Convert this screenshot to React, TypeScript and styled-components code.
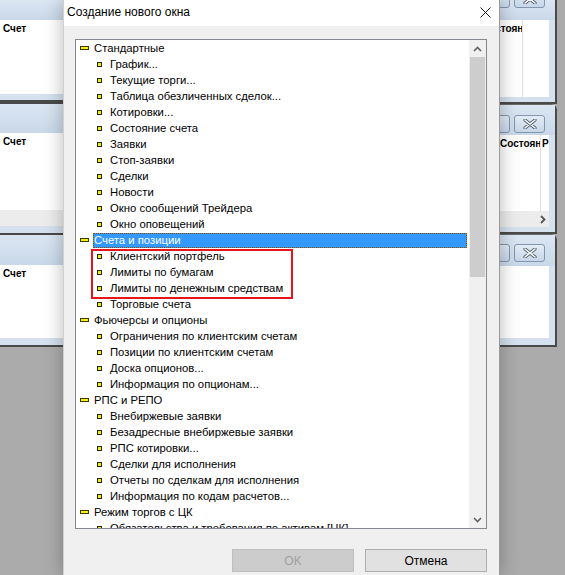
import React from 'react'
import styled, { createGlobalStyle } from 'styled-components'

const GlobalStyle = createGlobalStyle`
    html, body {
        margin: 0;
        padding: 0;
        background: #ababab;
    }
    body {
        font-family: "Liberation Sans", Arial, sans-serif;
        font-size: 12px;
        color: #000;
    }
`

const Desktop = styled.div`
    display: grid;
    grid-template-columns: 63px 437px 65px;
    width: 565px;
    height: 575px;
    overflow: hidden;
    background: #ababab;
`

const MdiColumn = styled.div<{ $side: 'left' | 'right' }>`
    display: flex;
    flex-direction: column;
    padding-right: ${p => p.$side === 'right' ? '8px' : '0'};
    margin-left: ${p => p.$side === 'right' ? '-30px' : '0'};
`

const MdiWindow = styled.div<{ $h: number; $rounded?: boolean }>`
    display: flex;
    flex-direction: column;
    height: ${p => p.$h}px;
    background: #d5e1ee;
    border-bottom: 2px solid #4a4a4a;
    border-top: ${p => p.$rounded ? '1px solid #6a6a6a' : '0'};
    border-right: 2px solid #4a4a4a;
    border-top-right-radius: ${p => p.$rounded ? '6px' : '0'};
    box-sizing: border-box;
    flex-shrink: 0;
`

const MdiLeftWindow = styled(MdiWindow)`
    border-right: 0;
`

const MdiTitle = styled.div<{ $h: number }>`
    display: flex;
    justify-content: flex-end;
    align-items: flex-start;
    gap: 4px;
    height: ${p => p.$h}px;
    padding-right: 10px;
    background: linear-gradient(#dbe6f2, #c9d8e9);
    flex-shrink: 0;
    box-sizing: border-box;
`

const MdiButton = styled.div<{ $w: number; $top: number }>`
    display: flex;
    align-items: center;
    justify-content: center;
    width: ${p => p.$w}px;
    height: 18px;
    margin-top: ${p => p.$top}px;
    border: 1px solid #8396ad;
    border-radius: 3px;
    background: linear-gradient(#e3ecf6, #c7d6e8);
    box-sizing: border-box;
    flex-shrink: 0;
`

const MdiBody = styled.div<{ $h: number; $sep?: number }>`
    position: relative;
    height: ${p => p.$h}px;
    background: #fff;
    margin-right: 6px;
    flex-shrink: 0;
    overflow: hidden;
    &::after {
        content: '';
        display: ${p => p.$sep ? 'block' : 'none'};
        position: absolute;
        top: 0;
        bottom: 0;
        left: ${p => p.$sep}px;
        border-left: 1px solid #e2e2e2;
    }
`

const MdiLeftBody = styled(MdiBody)`
    margin-right: 0;
`

const ColumnHead = styled.div<{ $x?: number; $w?: number }>`
    width: ${p => p.$w ? `${p.$w}px` : 'auto'};
    padding: 3px 0 0 ${p => p.$x ?? 3}px;
    font-size: 10px;
    font-weight: bold;
    white-space: nowrap;
    overflow: hidden;
    box-sizing: border-box;
    flex-shrink: 0;
`

const HeadRow = styled.div`
    display: flex;
`

const MdiHScroll = styled.div`
    display: flex;
    align-items: center;
    justify-content: flex-end;
    height: 16px;
    margin-right: 6px;
    padding-right: 3px;
    background: #ececec;
    color: #606060;
    flex-shrink: 0;
`

const Dialog = styled.div`
    display: flex;
    flex-direction: column;
    position: relative;
    z-index: 2;
    background: #f0f0f0;
    border-left: 1px solid #d0d0d0;
    border-right: 1px solid #9a9a9a;
    box-shadow: 0 0 18px rgba(0, 0, 0, 0.28);
    box-sizing: border-box;
`

const TitleBar = styled.div`
    display: flex;
    align-items: center;
    justify-content: space-between;
    height: 24px;
    padding: 0 8px 2px 3px;
    background: #fff;
    font-size: 12px;
    flex-shrink: 0;
`

const Body = styled.div`
    display: flex;
    flex-direction: column;
    padding: 13px 12px 0 11px;
`

const TreeBox = styled.div`
    display: flex;
    height: 490px;
    border: 1px solid #828790;
    background: #fff;
    box-sizing: border-box;
`

const TreeList = styled.div`
    position: relative;
    flex: 1;
    overflow: hidden;
    font-size: 11.3px;
`

const Row = styled.div<{ $level: number }>`
    display: flex;
    align-items: center;
    height: 16px;
    padding-left: ${p => p.$level === 0 ? 4 : 21}px;
    white-space: nowrap;
`

const GroupIcon = styled.span`
    width: 9px;
    height: 4px;
    background: #f6f000;
    border: 1px solid #3a3a00;
    box-sizing: border-box;
    margin-right: 4px;
    flex-shrink: 0;
`

const LeafIcon = styled.span`
    width: 5px;
    height: 5px;
    background: #f6f000;
    border: 1px solid #202000;
    box-sizing: border-box;
    margin-right: 7px;
    flex-shrink: 0;
`

const Label = styled.span<{ $selected?: boolean }>`
    display: flex;
    align-items: center;
    height: 15px;
    padding: 0 1px;
    background: ${p => p.$selected ? '#3399ff' : 'transparent'};
    color: ${p => p.$selected ? '#fff' : '#000'};
    outline: ${p => p.$selected ? '1px dotted #8a4a00' : 'none'};
    outline-offset: -1px;
    flex: ${p => p.$selected ? 1 : 'none'};
    margin-right: ${p => p.$selected ? '2px' : '0'};
`

const Mark = styled.div`
    position: absolute;
    top: 209px;
    left: 15px;
    width: 202px;
    height: 50px;
    border: 2px solid #e8141c;
    box-sizing: border-box;
    pointer-events: none;
`

const VScroll = styled.div`
    display: flex;
    flex-direction: column;
    width: 17px;
    background: #f0f0f0;
    flex-shrink: 0;
`

const ScrollArrow = styled.div`
    display: flex;
    align-items: center;
    justify-content: center;
    height: 17px;
    flex-shrink: 0;
`

const ScrollTrack = styled.div`
    flex: 1;
    display: flex;
    flex-direction: column;
`

const Thumb = styled.div<{ $h: number }>`
    height: ${p => p.$h}px;
    margin: 0 1px;
    background: #cdcdcd;
`

const ButtonRow = styled.div`
    display: flex;
    justify-content: flex-end;
    gap: 11px;
    margin-top: 20px;
`

const Button = styled.div<{ $disabled?: boolean }>`
    display: flex;
    align-items: center;
    justify-content: center;
    width: 122px;
    height: 23px;
    box-sizing: border-box;
    border: 1px solid ${p => p.$disabled ? '#bfbfbf' : '#adadad'};
    background: ${p => p.$disabled ? '#cccccc' : '#e1e1e1'};
    color: ${p => p.$disabled ? '#a0a0a0' : '#000'};
    font-size: 12px;
`

type Item = { text: string; level: number; selected?: boolean }

const items: Item[] = [
    { text: 'Стандартные', level: 0 },
    { text: 'График...', level: 1 },
    { text: 'Текущие торги...', level: 1 },
    { text: 'Таблица обезличенных сделок...', level: 1 },
    { text: 'Котировки...', level: 1 },
    { text: 'Состояние счета', level: 1 },
    { text: 'Заявки', level: 1 },
    { text: 'Стоп-заявки', level: 1 },
    { text: 'Сделки', level: 1 },
    { text: 'Новости', level: 1 },
    { text: 'Окно сообщений Трейдера', level: 1 },
    { text: 'Окно оповещений', level: 1 },
    { text: 'Счета и позиции', level: 0, selected: true },
    { text: 'Клиентский портфель', level: 1 },
    { text: 'Лимиты по бумагам', level: 1 },
    { text: 'Лимиты по денежным средствам', level: 1 },
    { text: 'Торговые счета', level: 1 },
    { text: 'Фьючерсы и опционы', level: 0 },
    { text: 'Ограничения по клиентским счетам', level: 1 },
    { text: 'Позиции по клиентским счетам', level: 1 },
    { text: 'Доска опционов...', level: 1 },
    { text: 'Информация по опционам...', level: 1 },
    { text: 'РПС и РЕПО', level: 0 },
    { text: 'Внебиржевые заявки', level: 1 },
    { text: 'Безадресные внебиржевые заявки', level: 1 },
    { text: 'РПС котировки...', level: 1 },
    { text: 'Сделки для исполнения', level: 1 },
    { text: 'Отчеты по сделкам для исполнения', level: 1 },
    { text: 'Информация по кодам расчетов...', level: 1 },
    { text: 'Режим торгов с ЦК', level: 0 },
    { text: 'Обязательства и требования по активам [ЦК]', level: 1 },
]

const CloseIcon = () => (
    <svg width="11" height="11" viewBox="0 0 11 11">
        <path d="M0.5 0.5 L10.5 10.5 M10.5 0.5 L0.5 10.5" stroke="#1a1a1a" strokeWidth="1" />
    </svg>
)

const MdiClose = () => (
    <svg width="14" height="10" viewBox="0 0 14 10">
        <path d="M2 1 L12 9 M12 1 L2 9" stroke="#4a5566" strokeWidth="3.2" strokeLinecap="round" />
        <path d="M2 1 L12 9 M12 1 L2 9" stroke="#fff" strokeWidth="1.6" strokeLinecap="round" />
    </svg>
)

const Chevron = ({ up }: { up?: boolean }) => (
    <svg width="9" height="6" viewBox="0 0 9 6">
        <path d={up ? 'M1 5 L4.5 1.5 L8 5' : 'M1 1 L4.5 4.5 L8 1'} stroke="#606060" strokeWidth="1.6" fill="none" />
    </svg>
)

const SmallArrow = () => (
    <svg width="6" height="9" viewBox="0 0 6 9">
        <path d="M1 1 L4.5 4.5 L1 8" stroke="#555" strokeWidth="1.8" fill="none" />
    </svg>
)

const App: React.FC = () => {
    return (
        <>
            <GlobalStyle />
            <Desktop>
                <MdiColumn $side="left">
                    <MdiLeftWindow $h={102}>
                        <MdiTitle $h={20} />
                        <MdiLeftBody $h={74}><ColumnHead>Счет</ColumnHead></MdiLeftBody>
                    </MdiLeftWindow>
                    <MdiLeftWindow $h={133} style={{ borderTop: '2px solid #4a4a4a' }}>
                        <MdiTitle $h={29} />
                        <MdiLeftBody $h={77}><ColumnHead>Счет</ColumnHead></MdiLeftBody>
                        <MdiHScroll style={{ marginRight: 0 }} />
                    </MdiLeftWindow>
                    <MdiLeftWindow $h={112}>
                        <MdiTitle $h={30} />
                        <MdiLeftBody $h={73}><ColumnHead>Счет</ColumnHead></MdiLeftBody>
                    </MdiLeftWindow>
                </MdiColumn>

                <Dialog>
                    <TitleBar>
                        <span>Создание нового окна</span>
                        <CloseIcon />
                    </TitleBar>
                    <Body>
                        <TreeBox>
                            <TreeList>
                                {items.map((it, k) => (
                                    <Row key={k} $level={it.level}>
                                        {it.level === 0 ? <GroupIcon /> : <LeafIcon />}
                                        <Label $selected={it.selected}>{it.text}</Label>
                                    </Row>
                                ))}
                                <Mark />
                            </TreeList>
                            <VScroll>
                                <ScrollArrow><Chevron up /></ScrollArrow>
                                <ScrollTrack>
                                    <Thumb $h={220} />
                                </ScrollTrack>
                                <ScrollArrow><Chevron /></ScrollArrow>
                            </VScroll>
                        </TreeBox>
                        <ButtonRow>
                            <Button $disabled>OK</Button>
                            <Button>Отмена</Button>
                        </ButtonRow>
                    </Body>
                </Dialog>

                <MdiColumn $side="right">
                    <MdiWindow $h={104}>
                        <MdiTitle $h={20}>
                            <MdiButton $w={24} $top={-10} />
                            <MdiButton $w={31} $top={-10}><MdiClose /></MdiButton>
                        </MdiTitle>
                        <MdiBody $h={77} $sep={52}><ColumnHead $x={12} $w={52}>Состояние</ColumnHead></MdiBody>
                    </MdiWindow>
                    <MdiWindow $h={130} $rounded>
                        <MdiTitle $h={30}>
                            <MdiButton $w={24} $top={10} />
                            <MdiButton $w={31} $top={10}><MdiClose /></MdiButton>
                        </MdiTitle>
                        <MdiBody $h={76} $sep={70}>
                            <HeadRow>
                                <ColumnHead $x={30} $w={71}>Состояние</ColumnHead>
                                <ColumnHead $x={1}>Р</ColumnHead>
                            </HeadRow>
                        </MdiBody>
                        <MdiHScroll><SmallArrow /></MdiHScroll>
                    </MdiWindow>
                    <MdiWindow $h={113} $rounded>
                        <MdiTitle $h={31}>
                            <MdiButton $w={24} $top={9} />
                            <MdiButton $w={31} $top={9}><MdiClose /></MdiButton>
                        </MdiTitle>
                        <MdiBody $h={72} />
                    </MdiWindow>
                </MdiColumn>
            </Desktop>
        </>
    )
}

export default App
